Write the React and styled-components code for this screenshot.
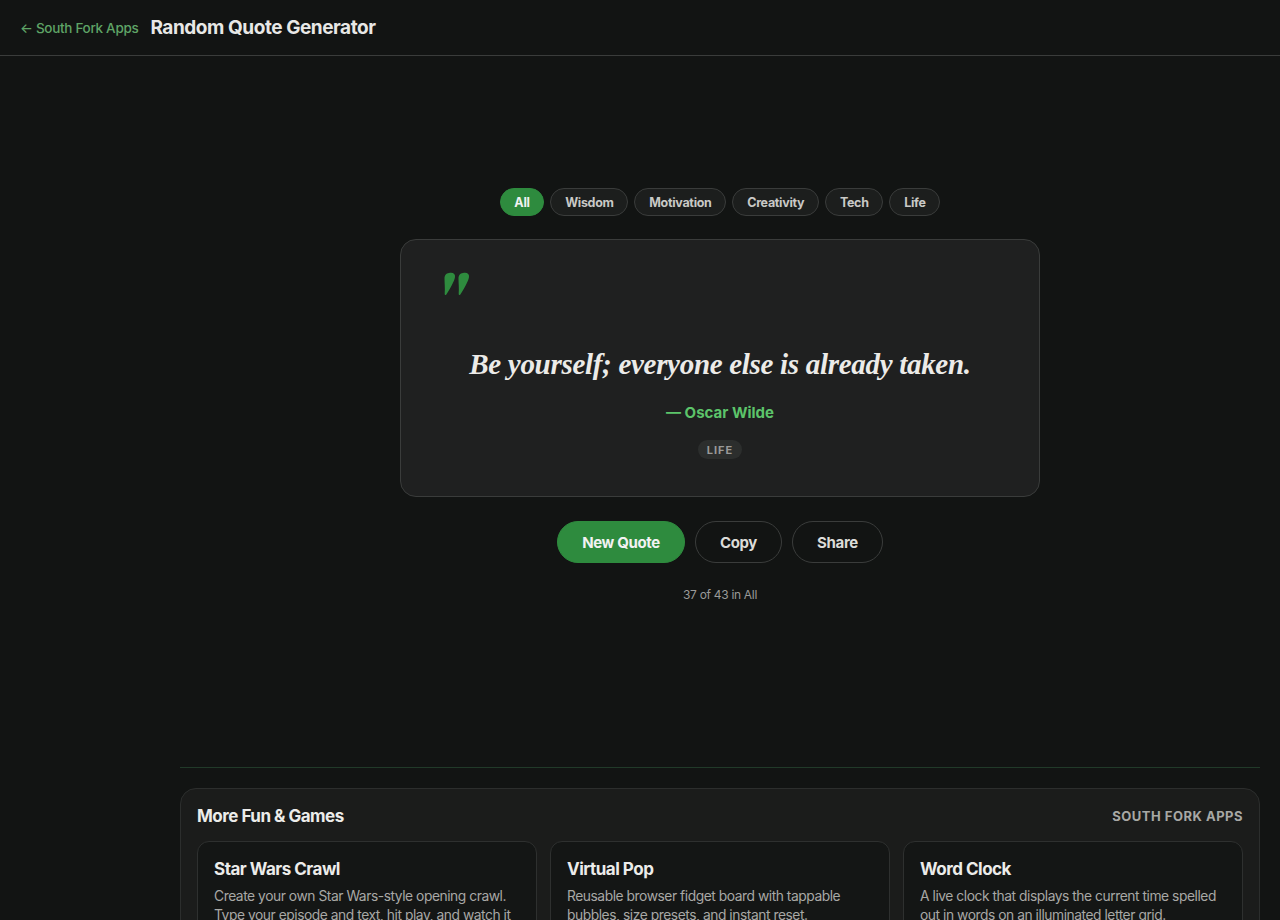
import React from "react";
import styled, { createGlobalStyle } from "styled-components";

const Global = createGlobalStyle`
  html, body { margin: 0; padding: 0; background: #121413; }
  body { font-family: Inter, "Noto Sans", sans-serif; color: #e6e6e6; }
  * { box-sizing: border-box; }
`;

const Page = styled.div`
  min-height: 920px;
  background: #121413;
`;

const Header = styled.header`
  height: 56px;
  display: flex;
  align-items: center;
  gap: 12px;
  padding: 0 20px;
  border-bottom: 1px solid #3a3c3b;
`;

const BackLink = styled.a`
  color: #5fa466;
  font-size: 13.5px;
  font-weight: 500;
  letter-spacing: -0.3px;
  text-decoration: none;
  padding-top: 1px;
`;

const Title = styled.h1`
  margin: 0;
  font-size: 19px;
  font-weight: 700;
  letter-spacing: -0.45px;
  color: #e8e8e6;
`;

const Body = styled.div`
  display: grid;
  grid-template-columns: 160px 1fr;
`;

const Main = styled.main`
  display: flex;
  flex-direction: column;
  align-items: center;
  padding: 132px 20px 0;
`;

const Filters = styled.div`
  display: flex;
  gap: 6px;
`;

const Pill = styled.button`
  height: 28px;
  padding: 0 13.8px;
  border-radius: 999px;
  border: 1px solid ${p => (p.$active ? "#2e8b3e" : "#3a3c3b")};
  background: ${p => (p.$active ? "#2e8b3e" : "#1c1e1d")};
  color: ${p => (p.$active ? "#f2f2f2" : "#c9c9c6")};
  font-family: inherit;
  font-size: 12.5px;
  font-weight: 700;
  letter-spacing: -0.3px;
`;

const Card = styled.section`
  margin-top: 23px;
  width: 640px;
  height: 258px;
  border-radius: 16px;
  border: 1px solid #3a3c3b;
  background: #1f2020;
  padding: 32px 42px 0;
  display: flex;
  flex-direction: column;
  align-items: center;
`;

const MarkRow = styled.div`
  align-self: stretch;
  height: 24px;
`;

const Quote = styled.blockquote`
  margin: 48px 0 0;
  font-family: "Liberation Serif", "DejaVu Serif", serif;
  font-style: italic;
  font-weight: 700;
  font-size: 29px;
  letter-spacing: -0.3px;
  color: #ecebe8;
  text-align: center;
  line-height: 40px;
`;

const Author = styled.div`
  margin-top: 19px;
  color: #5cc46a;
  font-size: 15px;
  font-weight: 700;
  letter-spacing: 0px;
`;

const Tag = styled.span`
  margin-top: 18px;
  padding: 0 9px;
  height: 19px;
  display: inline-flex;
  align-items: center;
  border-radius: 999px;
  background: #2c2e2d;
  color: #9a9a98;
  font-size: 11px;
  font-weight: 700;
  letter-spacing: 1px;
`;

const Actions = styled.div`
  margin-top: 24px;
  display: flex;
  gap: 10px;
`;

const ActionButton = styled.button`
  height: 42px;
  padding: 0 24px;
  border-radius: 999px;
  border: 1px solid ${p => (p.$primary ? "#2e8b3e" : "#3a3c3b")};
  background: ${p => (p.$primary ? "#2e8b3e" : "transparent")};
  color: ${p => (p.$primary ? "#f2f2f2" : "#dcdcd8")};
  font-family: inherit;
  font-size: 15px;
  font-weight: 700;
  letter-spacing: -0.35px;
`;

const Counter = styled.div`
  margin-top: 24px;
  font-size: 12px;
  color: #9a9a98;
  letter-spacing: -0.3px;
`;

const Divider = styled.hr`
  align-self: stretch;
  margin: 165px 0 0;
  border: 0;
  border-top: 1px solid #213a29;
`;

const More = styled.section`
  align-self: stretch;
  margin-top: 20px;
  border: 1px solid #2c2e2d;
  border-radius: 16px;
  background: #1b1c1b;
  padding: 17px 16px 20px;
`;

const MoreHead = styled.div`
  display: flex;
  align-items: center;
  justify-content: space-between;
  margin-bottom: 15px;
`;

const MoreTitle = styled.h2`
  margin: 0;
  font-size: 17px;
  font-weight: 700;
  letter-spacing: -0.5px;
  color: #ececea;
`;

const Brand = styled.span`
  font-size: 13px;
  font-weight: 700;
  letter-spacing: 0.5px;
  color: #a8a8a5;
`;

const Grid = styled.div`
  display: grid;
  grid-template-columns: repeat(3, 1fr);
  gap: 13px;
`;

const AppCard = styled.a`
  display: block;
  border: 1px solid #2e302f;
  border-radius: 12px;
  background: #141615;
  padding: 17px 16px 16px;
  text-decoration: none;
  height: 140px;
`;

const AppTitle = styled.h3`
  margin: 0 0 8px;
  font-size: 17px;
  font-weight: 700;
  letter-spacing: -0.5px;
  color: #ececea;
`;

const AppDesc = styled.p`
  margin: 0;
  font-size: 13.8px;
  line-height: 19px;
  letter-spacing: -0.45px;
  color: #a8a8a5;
`;

const QuoteMark = () => (
  <svg width="28" height="24" viewBox="0 0 28 24">
    <path d="M6 1 C10 0 12.5 2 12 5 C11.5 9 7 17 3 23 C2 23 1.6 22.5 1.7 21.5 C2.2 16 1.5 11 1.5 7 C1.5 3 3 1.5 6 1 Z" fill="#2e8b3e" />
    <path d="M20 1 C24 0 26.5 2 26 5 C25.5 9 21 17 17 23 C16 23 15.6 22.5 15.7 21.5 C16.2 16 15.5 11 15.5 7 C15.5 3 17 1.5 20 1 Z" fill="#2e8b3e" />
  </svg>
);

const categories = ["All", "Wisdom", "Motivation", "Creativity", "Tech", "Life"];

const apps = [
  {
    title: "Star Wars Crawl",
    desc: "Create your own Star Wars-style opening crawl. Type your episode and text, hit play, and watch it roll.",
  },
  {
    title: "Virtual Pop",
    desc: "Reusable browser fidget board with tappable bubbles, size presets, and instant reset.",
  },
  {
    title: "Word Clock",
    desc: "A live clock that displays the current time spelled out in words on an illuminated letter grid.",
  },
];

export default function App() {
  return (
    <Page>
      <Global />
      <Header>
        <BackLink href="#">← South Fork Apps</BackLink>
        <Title>Random Quote Generator</Title>
      </Header>
      <Body>
        <div />
        <Main>
          <Filters>
            {categories.map((c, i) => (
              <Pill key={c} $active={i === 0}>{c}</Pill>
            ))}
          </Filters>
          <Card>
            <MarkRow>
              <QuoteMark />
            </MarkRow>
            <Quote>Be yourself; everyone else is already taken.</Quote>
            <Author>— Oscar Wilde</Author>
            <Tag>LIFE</Tag>
          </Card>
          <Actions>
            <ActionButton $primary>New Quote</ActionButton>
            <ActionButton>Copy</ActionButton>
            <ActionButton>Share</ActionButton>
          </Actions>
          <Counter>37 of 43 in All</Counter>
          <Divider />
          <More>
            <MoreHead>
              <MoreTitle>More Fun &amp; Games</MoreTitle>
              <Brand>SOUTH FORK APPS</Brand>
            </MoreHead>
            <Grid>
              {apps.map(a => (
                <AppCard key={a.title} href="#">
                  <AppTitle>{a.title}</AppTitle>
                  <AppDesc>{a.desc}</AppDesc>
                </AppCard>
              ))}
            </Grid>
          </More>
        </Main>
      </Body>
    </Page>
  );
}
